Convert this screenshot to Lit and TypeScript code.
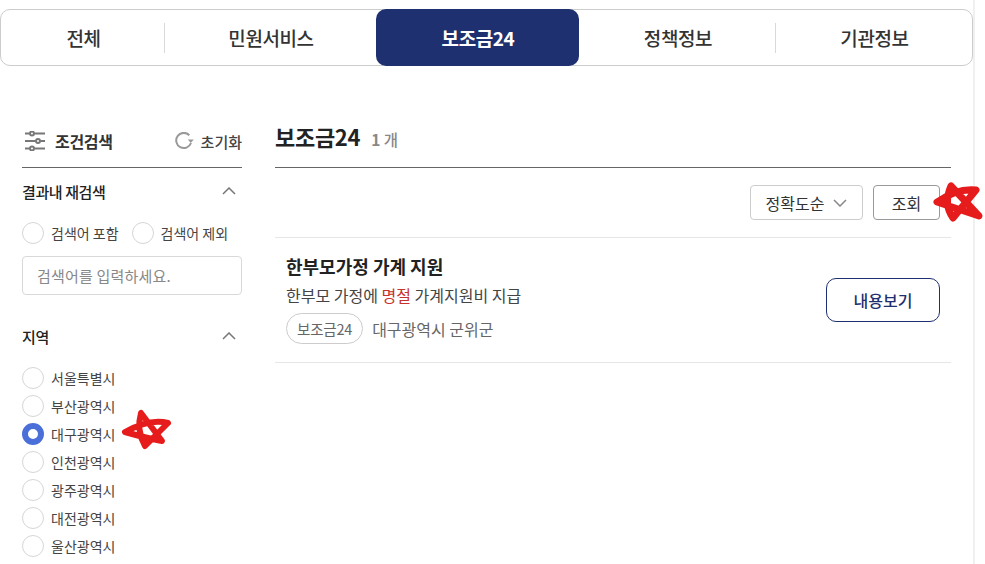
import { LitElement, html, css, svg } from "lit";
import { customElement } from "lit/decorators.js";

const tabs = [
  { label: "전체", divider: true },
  { label: "민원서비스" },
  { label: "보조금24", active: true },
  { label: "정책정보", divider: true },
  { label: "기관정보" },
];

const regions = ["서울특별시", "부산광역시", "대구광역시", "인천광역시", "광주광역시", "대전광역시", "울산광역시"];

@customElement("app-root")
export class AppRoot extends LitElement {
  static styles = css`
    :host {
      display: block;
      position: relative;
      width: 985px;
      height: 564px;
      overflow: hidden;
      background: #fff;
      font-family: "Noto Sans CJK KR", "Noto Sans", sans-serif;
      color: #333;
    }
    .page {
      box-sizing: border-box;
      width: 975px;
      height: 564px;
      padding-top: 9px;
      border-right: 2px solid #f0f0f0;
    }
    .tabs {
      box-sizing: border-box;
      display: grid;
      grid-template-columns: 164px 211px 203px 197px 196px;
      width: 973px;
      height: 57px;
      border: 1px solid #ccc;
      border-radius: 10px;
    }
    .tab {
      display: flex;
      align-items: center;
      justify-content: center;
      margin: -1px 0;
      padding: 0 0 1px 1px;
      font-size: 19px;
      font-weight: 500;
      letter-spacing: -0.4px;
      color: #333;
      position: relative;
    }
    .tab.divider::after {
      content: "";
      position: absolute;
      right: 0;
      top: 14px;
      bottom: 13px;
      width: 1px;
      background: #d9d9d9;
    }
    .tab.active {
      background: #1f3070;
      color: #fff;
      font-weight: 700;
      border-radius: 10px;
    }
    .body {
      display: flex;
      padding: 56px 22px 0;
      gap: 33px;
    }
    .side {
      width: 220px;
      flex: none;
    }
    .side-head {
      display: flex;
      align-items: center;
      height: 38px;
      padding-bottom: 7px;
      border-bottom: 1px solid #666;
    }
    .side-title {
      display: flex;
      align-items: center;
      gap: 10px;
      font-size: 16px;
      font-weight: 700;
      letter-spacing: -0.3px;
      padding-left: 3px;
    }
    .reset {
      margin-left: auto;
      display: flex;
      align-items: center;
      gap: 7px;
      font-size: 15px;
      font-weight: 500;
      color: #444;
    }
    .sec-head {
      display: flex;
      align-items: center;
      justify-content: space-between;
      font-size: 15px;
      font-weight: 500;
      color: #222;
      letter-spacing: -0.4px;
      height: 22px;
      padding-right: 6px;
    }
    .first { margin-top: 12px; }
    .pair {
      display: flex;
      gap: 13px;
      margin-top: 17px;
    }
    .radio {
      display: flex;
      align-items: center;
      height: 28px;
      gap: 7px;
      font-size: 14px;
      color: #444;
    }
    .dot {
      box-sizing: border-box;
      width: 22px;
      height: 22px;
      flex: none;
      border: 1px solid #d6d6d6;
      border-radius: 50%;
      background: #fff;
    }
    .dot.on {
      border: 6.5px solid #4a6fd8;
    }
    .search {
      box-sizing: border-box;
      height: 39px;
      margin-top: 9px;
      padding-left: 14px;
      display: flex;
      align-items: center;
      border: 1px solid #d9d9d9;
      border-radius: 4px;
      font-size: 15px;
      letter-spacing: 0.2px;
      color: #888;
    }
    .region-head { margin-top: 30px; }
    .regions {
      margin-top: 17px;
    }
    .main {
      flex: 1;
      min-width: 0;
      width: 676px;
    }
    .main-head {
      display: flex;
      align-items: baseline;
      gap: 11px;
      height: 43px;
      padding-bottom: 2px;
      box-sizing: content-box;
      border-bottom: 1px solid #666;
    }
    .main-head h2 {
      margin: -1px 0 0;
      font-size: 22px;
      line-height: 30px;
      font-weight: 700;
      letter-spacing: -0.3px;
      color: #222;
    }
    .count {
      font-size: 15.5px;
      font-weight: 500;
      color: #888;
    }
    .count b { font-weight: 700; }
    .tools {
      display: flex;
      justify-content: flex-end;
      gap: 10px;
      padding: 17px 11px 17px 0;
      border-bottom: 1px solid #e6e6e6;
    }
    .select, .query {
      box-sizing: border-box;
      height: 35px;
      display: flex;
      align-items: center;
      justify-content: center;
      background: #fff;
      border-radius: 4px;
      font-size: 16px;
      color: #333;
    }
    .select {
      width: 113px;
      gap: 9px;
      border: 1px solid #ccc;
    }
    .query {
      width: 67px;
      border: 1px solid #999;
    }
    .result {
      display: flex;
      align-items: center;
      justify-content: space-between;
      height: 124px;
      padding: 0 11px;
      border-bottom: 1px solid #e6e6e6;
    }
    .info {
      padding-bottom: 3px;
    }
    .result h3 {
      margin: 0 0 4px;
      font-size: 18px;
      line-height: 26px;
      font-weight: 700;
      color: #222;
    }
    .desc {
      font-size: 16px;
      line-height: 24px;
      color: #444;
    }
    .desc em {
      font-style: normal;
      color: #c8322c;
    }
    .meta {
      display: flex;
      align-items: center;
      gap: 9px;
      margin-top: 6px;
      font-size: 16px;
      color: #666;
    }
    .chip {
      box-sizing: border-box;
      height: 31px;
      display: flex;
      align-items: center;
      padding: 0 10px;
      border: 1px solid #ccc;
      border-radius: 16px;
      font-size: 14.5px;
      letter-spacing: -0.2px;
    }
    .view {
      box-sizing: border-box;
      width: 114px;
      height: 44px;
      display: flex;
      align-items: center;
      justify-content: center;
      border: 1px solid #1f3070;
      border-radius: 10px;
      font-size: 16px;
      font-weight: 500;
      color: #1f3070;
    }
    .marks {
      position: absolute;
      inset: 0;
      width: 985px;
      height: 564px;
      pointer-events: none;
    }
    .marks path {
      fill: none;
      stroke: #e61c1c;
      stroke-linecap: round;
      stroke-linejoin: round;
    }
  `;

  private chevron(up: boolean) {
    return html`<svg width="14" height="8" viewBox="0 0 14 8" fill="none" stroke=${up ? "#777" : "#888"} stroke-width="1.5">
      <path d=${up ? "M1 7l6-6 6 6" : "M1 1l6 6 6-6"}></path>
    </svg>`;
  }

  private radio(label: string, on = false) {
    return html`<div class="radio"><span class="dot ${on ? "on" : ""}"></span>${label}</div>`;
  }

  render() {
    return html`
      <div class="page">
        <nav class="tabs">
          ${tabs.map(
            (t) => html`<div class="tab ${t.active ? "active" : ""} ${t.divider ? "divider" : ""}">${t.label}</div>`
          )}
        </nav>
        <div class="body">
          <aside class="side">
            <div class="side-head">
              <div class="side-title">
                <svg width="20" height="20" viewBox="0 0 20 20" fill="none" stroke="#777" stroke-width="2">
                  <path d="M0 2.5h4.5M9.5 2.5H20M0 10h10.5M15.5 10H20M0 17.5h4.5M9.5 17.5H20"></path>
                  <circle cx="7" cy="2.5" r="2"></circle>
                  <circle cx="13" cy="10" r="2"></circle>
                  <circle cx="7" cy="17.5" r="2"></circle>
                </svg>
                조건검색
              </div>
              <div class="reset">
                <svg width="19" height="18" viewBox="0 0 19 18" fill="none">
                  <path d="M14.3 3.2A7.6 7.6 0 1 0 16 11" stroke="#999" stroke-width="2"></path>
                  <path d="M12.8 7.4h6l-3 3.6z" fill="#999"></path>
                </svg>
                초기화
              </div>
            </div>
            <div class="sec-head first">결과내 재검색 ${this.chevron(true)}</div>
            <div class="pair">${this.radio("검색어 포함")}${this.radio("검색어 제외")}</div>
            <div class="search">검색어를 입력하세요.</div>
            <div class="sec-head region-head">지역 ${this.chevron(true)}</div>
            <div class="regions">${regions.map((r) => this.radio(r, r === "대구광역시"))}</div>
          </aside>
          <main class="main">
            <div class="main-head">
              <h2>보조금24</h2>
              <span class="count"><b>1</b> 개</span>
            </div>
            <div class="tools">
              <div class="select">정확도순 ${this.chevron(false)}</div>
              <div class="query">조회</div>
            </div>
            <div class="result">
              <div class="info">
                <h3>한부모가정 가계 지원</h3>
                <div class="desc">한부모 가정에 <em>명절</em> 가계지원비 지급</div>
                <div class="meta"><span class="chip">보조금24</span>대구광역시 군위군</div>
              </div>
              <div class="view">내용보기</div>
            </div>
          </main>
        </div>
      </div>
      <svg class="marks" viewBox="0 0 985 564">
        ${svg`<path stroke-width="6" d="M125 432 Q146 438 162 441 L141 413 Q136 430 145 446 L168 423 Q150 418 125 432z"></path>
        <path stroke-width="7" d="M937 202 Q958 209 979 216 L951 186 Q943 204 953 218 L976 190 Q957 188 937 202z"></path>`}
      </svg>
    `;
  }
}
